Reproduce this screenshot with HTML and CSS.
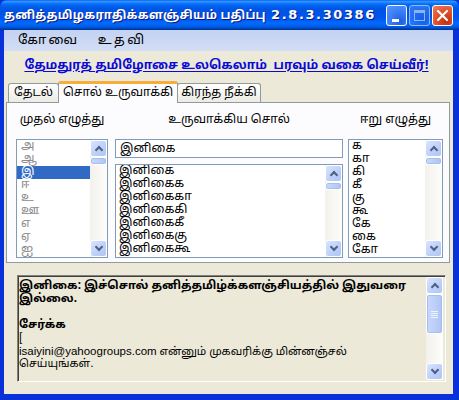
FILE: index.html
```html
<!DOCTYPE html>
<html>
<head>
<meta charset="utf-8">
<link rel="stylesheet" href="styles.css">
</head>
<body>
<div class="win">
  <div class="titlebar">
    <span class="title">தனித்தமிழகராதிக்களஞ்சியம் பதிப்பு <span class="ver">2.8.3.30386</span></span>
    <div class="ctrls">
      <span class="wbtn wmin"><span class="minbar"></span></span>
      <span class="wbtn wmax"><span class="maxbox"></span></span>
      <span class="wbtn wclose">
        <svg width="13" height="13" viewBox="0 0 13 13"><path d="M2 2 L11 11 M11 2 L2 11" stroke="#fff" stroke-width="2.2" stroke-linecap="round"/></svg>
      </span>
    </div>
  </div>
  <div class="frame">
    <div class="menubar">
      <span class="menuitem">கோவை</span>
      <span class="menuitem">உதவி</span>
    </div>
    <div class="banner"><span class="slogan">தேமதுரத் தமிழோசை உலகெலாம் &nbsp;பரவும் வகை செய்வீர்!</span></div>
    <div class="tabs">
      <span class="tab">தேடல்</span>
      <span class="tab active">சொல் உருவாக்கி</span>
      <span class="tab">கிரந்த நீக்கி</span>
    </div>
    <div class="panel">
      <div class="cols">
        <div class="col c-left">
          <div class="label">முதல் எழுத்து</div>
          <div class="list grey">
            <div class="items">
              <div class="item">அ</div>
              <div class="item">ஆ</div>
              <div class="item sel">இ</div>
              <div class="item">ஈ</div>
              <div class="item">உ</div>
              <div class="item">ஊ</div>
              <div class="item">எ</div>
              <div class="item">ஏ</div>
              <div class="item">ஐ</div>
            </div>
            <div class="sb"><span class="sbtn up"></span><span class="thumb small"></span><span class="track"></span><span class="sbtn down"></span></div>
          </div>
        </div>
        <div class="col c-mid">
          <div class="label">உருவாக்கிய சொல்</div>
          <div class="textbox">இனிகை</div>
          <div class="list midlist">
            <div class="items">
              <div class="item">இனிகை</div>
              <div class="item">இனிகைக</div>
              <div class="item">இனிகைகா</div>
              <div class="item">இனிகைகி</div>
              <div class="item">இனிகைகீ</div>
              <div class="item">இனிகைகு</div>
              <div class="item">இனிகைகூ</div>
            </div>
            <div class="sb"><span class="sbtn up"></span><span class="thumb small"></span><span class="track"></span><span class="sbtn down"></span></div>
          </div>
        </div>
        <div class="col c-right">
          <div class="label">ஈறு எழுத்து</div>
          <div class="list">
            <div class="items">
              <div class="item">க</div>
              <div class="item">கா</div>
              <div class="item">கி</div>
              <div class="item">கீ</div>
              <div class="item">கு</div>
              <div class="item">கூ</div>
              <div class="item">கே</div>
              <div class="item">கை</div>
              <div class="item">கோ</div>
            </div>
            <div class="sb"><span class="sbtn up"></span><span class="thumb small"></span><span class="track"></span><span class="sbtn down"></span></div>
          </div>
        </div>
      </div>
    </div>
    <div class="output">
      <div class="outtext">
        <div class="b">இனிகை: இச்சொல் தனித்தமிழ்க்களஞ்சியத்தில் இதுவரை</div>
        <div class="b">இல்லை.</div>
        <div class="blank">&nbsp;</div>
        <div class="b">சேர்க்க</div>
        <div class="thin">[</div>
        <div class="n"><span class="lat">isaiyini@yahoogroups.com</span> என்னும் முகவரிக்கு மின்னஞ்சல்</div>
        <div class="n">செய்யுங்கள்.</div>
      </div>
      <div class="sb"><span class="sbtn up"></span><span class="thumb big"><span class="grip"></span></span><span class="track"></span><span class="sbtn down"></span></div>
    </div>
  </div>
</div>
</body>
</html>
```
FILE: styles.css
```css
* { box-sizing: border-box; }
html, body { margin: 0; padding: 0; }
body {
  width: 459px; height: 400px; overflow: hidden;
  font-family: "Noto Sans Tamil", "Lohit Tamil", "Noto Sans", sans-serif;
  font-size: 12px; color: #000; background: #0831d9;
}
.win { width: 459px; height: 400px; display: flex; flex-direction: column; }
.titlebar {
  height: 30px; flex: none;
  display: flex; align-items: center; justify-content: space-between;
  padding: 0 6px 0 4px;
  border-radius: 7px 7px 0 0;
  background: linear-gradient(to bottom, #0058ee 0%, #3593ff 4%, #288eff 7%, #127dff 10%, #036ffc 14%, #0262ee 20%, #0057e5 28%, #0054e3 36%, #0055eb 56%, #005bf5 66%, #026afe 76%, #0062ef 86%, #0052d6 92%, #0040ab 96%, #003092 100%);
}
.title {
  color: #fff; font-weight: bold; font-size: 12px; white-space: nowrap;
  letter-spacing: 0.2px;
  text-shadow: 1px 1px 0 #0a1883;
}
.ver { font-family: "DejaVu Sans", sans-serif; font-size: 13px; letter-spacing: 1.6px; margin-left: 2px; }
.ctrls { display: flex; gap: 2px; }
.wbtn {
  width: 21px; height: 21px; border: 1px solid #fff; border-radius: 3px;
  display: flex; align-items: center; justify-content: center;
  background: radial-gradient(circle at 70% 80%, #1e5fe0 0%, #3c7ef5 50%, #5a96fb 100%);
  position: relative;
}
.wmin .minbar { position: absolute; left: 5px; top: 13px; width: 7px; height: 3px; background: #fff; }
.wmax { opacity: 0.55; }
.wmax .maxbox { width: 11px; height: 11px; border: 1px solid #fff; border-top-width: 3px; }
.wclose { background: radial-gradient(circle at 70% 80%, #c23210 0%, #e0502a 50%, #f08060 100%); }

.frame {
  flex: 1; display: flex; flex-direction: column;
  background: #ece9d8;
  border-left: 4px solid #0831d9; border-right: 6px solid #0831d9; border-bottom: 6px solid #0831d9;
}
.menubar {
  height: 21px; flex: none; display: flex; align-items: center;
  padding-left: 14px; gap: 18px;
  background: linear-gradient(to bottom, #c2d2f2, #d3def6);
  font-size: 13px; letter-spacing: 2.5px;
}
.banner {
  height: 29px; flex: none; display: flex; align-items: center; justify-content: center;
  padding-right: 4px;
}
.slogan {
  color: #0a0ad8; font-weight: bold; font-size: 12.5px; text-decoration: underline;
  text-underline-offset: 2px;
  white-space: nowrap;
}
.tabs {
  height: 22px; flex: none; display: flex; align-items: flex-end;
  padding-left: 2px; margin-left: 2px; position: relative; z-index: 2;
}
.tab {
  height: 19px; padding: 0 5px; font-size: 12px;
  display: flex; align-items: center;
  border: 1px solid #919b9c; border-bottom: none; border-radius: 3px 3px 0 0;
  background: linear-gradient(to bottom, #fff, #f3f3ef 60%, #ecebe5);
}
.tab:last-child { padding: 0 3px; }
.tab.active {
  height: 22px; background: #fcfcfe; border-top: 3px solid #f6ad3b;
  margin: 0 -1px -1px; padding: 0 4px 1px; position: relative;
}
.panel {
  height: 161px; flex: none;
  margin: 0 3px 0 2px;
  border: 1px solid #919b9c;
  background: #fcfcfe;
  padding: 7px 6px 4px 9px;
}
.cols { display: flex; gap: 6px; height: 100%; }
.col { display: flex; flex-direction: column; }
.c-left { width: 92px; }
.c-mid { width: 228px; margin-left: 1px; }
.c-right { width: 95px; margin-left: -1px; }
.label { height: 29px; text-align: center; font-size: 12px; padding-top: 3px; }
.list {
  flex: 1; display: flex; border: 1px solid #7f9db9; background: #fff; overflow: hidden;
}
.midlist { margin-top: 6px; }
.textbox {
  height: 19px; flex: none; border: 1px solid #7f9db9; background: #fff;
  padding: 0 4px; display: flex; align-items: center; font-size: 12px;
}
.items { flex: 1; overflow: hidden; }
.item { height: 13px; line-height: 13px; padding-left: 3px; font-size: 12px; white-space: nowrap; }
.grey .item { color: #8c8c8c; padding-left: 4px; }
.item.sel { background: #316ac5; color: #fff; }

.sb {
  width: 17px; flex: none; display: flex; flex-direction: column;
  background: linear-gradient(to right, #f3f1ec, #fdfdfa);
}
.sbtn {
  height: 17px; flex: none; border: 1px solid #fff; border-radius: 3px;
  background: linear-gradient(135deg, #d9e5fd, #bccff8 60%, #b0c5f5);
  position: relative;
}
.sbtn::after {
  content: ""; position: absolute; left: 5px; width: 4px; height: 4px;
  border-left: 2px solid #4d6185; border-top: 2px solid #4d6185;
}
.sbtn.up::after { top: 6px; transform: rotate(45deg); }
.sbtn.down::after { top: 3px; transform: rotate(225deg); }
.thumb {
  flex: none; border: 1px solid #fff; border-radius: 3px;
  background: linear-gradient(to right, #cad9fc, #b9cdf8 60%, #adc3f3);
  box-shadow: inset 0 0 0 1px #a7bdf0;
  display: flex; align-items: center; justify-content: center;
}
.thumb.small { height: 8px; }
.thumb.big { height: 40px; }
.grip {
  width: 7px; height: 7px;
  background: repeating-linear-gradient(to bottom, #eef4fe 0 1px, transparent 1px 2px);
}
.track { flex: 1; }

.output {
  height: 107px; flex: none; display: flex;
  margin: 12px 7px 0 13px;
  border: 1px solid; border-color: #808080 #fff #fff #808080;
  box-shadow: inset 1px 1px 0 #404040;
  background: #ece9d8;
  padding: 2px 2px 2px 1px;
}
.output .sb { margin: -1px 0; }
.outtext { flex: 1; font-size: 11px; padding-top: 2px; overflow: hidden; }
.outtext div { height: 13px; line-height: 13px; white-space: nowrap; }
.outtext .b { font-weight: bold; font-size: 11.5px; }
.lat { font-family: "Liberation Sans", sans-serif; font-size: 11.5px; }
```
